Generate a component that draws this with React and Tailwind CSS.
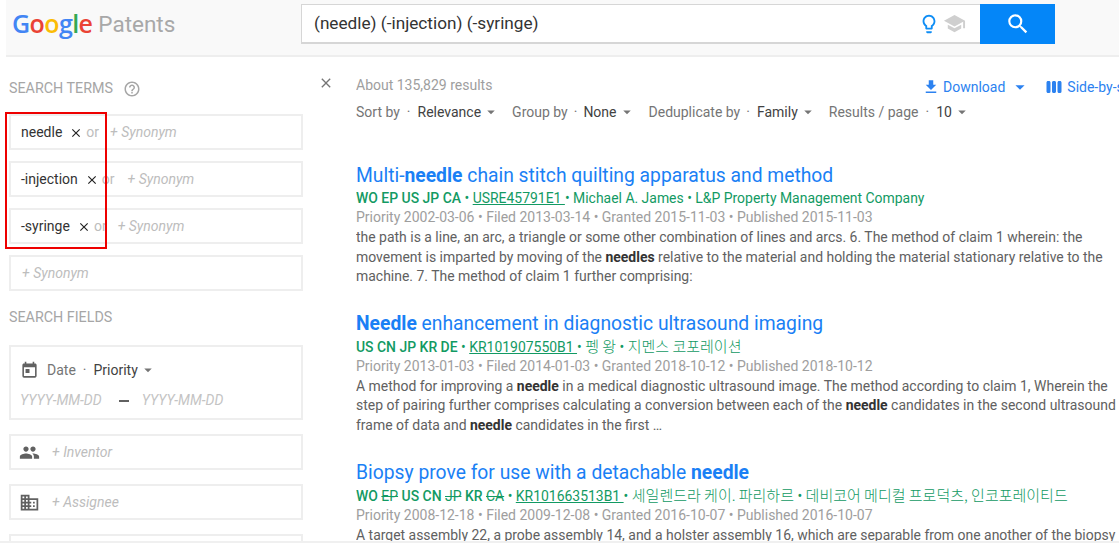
import {
  MdArrowDropDown,
  MdClose,
  MdDomain,
  MdFileDownload,
  MdHelpOutline,
  MdOutlineLightbulb,
  MdPeople,
  MdSchool,
  MdSearch,
  MdToday,
  MdViewWeek,
} from "react-icons/md";

const fontStack = "font-['Roboto','Noto_Sans_CJK_KR',sans-serif]";

const TermBox = ({ term, gap }) => (
  <div className="h-[36px] flex items-center border-2 border-[#eeeeee] pl-[10px] text-[14px]">
    <span className="text-[#333333]">{term}</span>
    <MdClose className="text-[#222222] ml-[7px] mt-[1px]" size={14} />
    <span className="text-[#bdbdbd] ml-[3px]">or</span>
    <span className={`italic text-[#bdbdbd] ${gap}`}>+ Synonym</span>
  </div>
);

const FieldBox = ({ icon, label }) => (
  <div className="h-[36px] flex items-center border-2 border-[#eeeeee] pl-[8px] text-[14px]">
    {icon}
    <span className="italic text-[#bdbdbd] ml-[12px]">{label}</span>
  </div>
);

const Filter = ({ label, value, className, dot = "mx-[6px]" }) => (
  <div className={`flex items-center ${className}`}>
    <span className="text-[#757575]">{label}</span>
    <span className={`text-[#757575] ${dot}`}>·</span>
    <span className="text-[#424242]">{value}</span>
    <MdArrowDropDown className="text-[#757575] ml-[1px]" size={18} />
  </div>
);

const Hl = ({ children }) => <b className="font-bold text-[#333333]">{children}</b>;

const Result = ({ title, meta, dates, children, className }) => (
  <div className={className}>
    <h3 className="text-[19.3px] pt-[1px] leading-[25px] text-[#1a80f5] whitespace-nowrap">{title}</h3>
    <div className="text-[13.95px] leading-[20px] text-[#129a63] whitespace-nowrap">{meta}</div>
    <div className="text-[14px] leading-[19px] text-[#9e9e9e] whitespace-nowrap">{dates}</div>
    <p className="text-[13.96px] leading-[19.5px] mt-[1px] text-[#616161] w-[763px]">{children}</p>
  </div>
);

const Code = ({ children }) => <b className="font-medium">{children}</b>;
const Off = ({ children }) => <span className="line-through font-normal">{children}</span>;
const Ko = ({ children }) => <span className="text-[15px] font-['Noto_Sans_CJK_KR',sans-serif] font-light">{children}</span>;

export default function App() {
  return (
    <div className={`h-[543px] w-[1119px] overflow-hidden bg-white relative ${fontStack}`}>
      <header className="ml-[6px] h-[57px] pt-[4px] bg-[#f9f9f9] border-b-2 border-[#eeeeee] flex">
        <div className="w-[295px] flex items-start pt-[2px] pl-[6px]">
          <span className="text-[25px] leading-[34px] tracking-[-0.6px] font-['Open_Sans',sans-serif] font-semibold">
            <span className="text-[#4285f4]">G</span>
            <span className="text-[#ea4335]">o</span>
            <span className="text-[#fbbc05]">o</span>
            <span className="text-[#4285f4]">g</span>
            <span className="text-[#34a853]">l</span>
            <span className="text-[#ea4335]">e</span>
          </span>
          <span className="text-[22.5px] leading-[36px] text-[#a8a8a8] ml-[6px]">Patents</span>
        </div>
        <div className="w-[679px] h-[40px] bg-white border border-[#d6d6d6] border-r-0 border-b-2 flex items-center pl-[12px] pr-[14px]">
          <span className="flex-1 text-[17.2px] text-[#333333]">(needle) (-injection) (-syringe)</span>
          <MdOutlineLightbulb className="text-[#0e8df5]" size={22} />
          <MdSchool className="text-[#cfcfcf] ml-[3px]" size={23} />
        </div>
        <button className="w-[75px] h-[40px] bg-[#0486f8] flex items-center justify-center">
          <MdSearch className="text-white" size={26} />
        </button>
      </header>

      <div className="flex">
        <aside className="w-[297px] ml-[6px] pl-[3px] shrink-0">
          <div className="flex items-center text-[14.3px] text-[#a6a6a6] mt-[23px] h-[17px]">
            SEARCH TERMS
            <MdHelpOutline className="ml-[10px]" size={18} />
          </div>
          <div className="flex flex-col gap-[11px] mt-[17px]">
            <TermBox term="needle" gap="ml-[11px]" />
            <TermBox term="-injection" gap="ml-[13px]" />
            <TermBox term="-syringe" gap="ml-[11px]" />
            <div className="h-[36px] flex items-center border-2 border-[#eeeeee] pl-[11px] text-[14px]">
              <span className="italic text-[#bdbdbd]">+ Synonym</span>
            </div>
          </div>
          <div className="text-[14.3px] text-[#a6a6a6] mt-[18px] h-[17px] leading-[17px]">SEARCH FIELDS</div>
          <div className="mt-[19px] h-[75px] border-2 border-[#eeeeee] pl-[9px] pt-[13px] text-[14px]">
            <div className="flex items-center h-[20px]">
              <MdToday className="text-[#616161]" size={19} />
              <span className="text-[#757575] ml-[8px]">Date</span>
              <span className="text-[#757575] mx-[7px]">·</span>
              <span className="text-[#424242]">Priority</span>
              <MdArrowDropDown className="text-[#757575] ml-[1px]" size={18} />
            </div>
            <div className="flex items-center mt-[10px] italic text-[#c4c4c4]">
              <span>YYYY-MM-DD</span>
              <span className="w-[10px] h-[2px] bg-[#616161] ml-[17px] mr-[13px]"></span>
              <span>YYYY-MM-DD</span>
            </div>
          </div>
          <div className="flex flex-col gap-[14px] mt-[14px]">
            <FieldBox icon={<MdPeople className="text-[#616161]" size={21} />} label="+ Inventor" />
            <FieldBox icon={<MdDomain className="text-[#616161]" size={21} />} label="+ Assignee" />
            <div className="h-[36px] border-2 border-[#eeeeee]"></div>
          </div>
        </aside>

        <div className="w-[53px] shrink-0 pl-[15px] pt-[18px]">
          <MdClose className="text-[#757575]" size={16} />
        </div>

        <main className="flex-1 min-w-0 overflow-hidden">
          <div className="flex items-start h-[27px] pt-[20px] whitespace-nowrap text-[14px]">
            <span className="text-[#9e9e9e] w-[566px] shrink-0 leading-[17px]">About 135,829 results</span>
            <div className="flex items-center text-[#2c82f0] leading-[17px] -mt-[1px]">
              <MdFileDownload size={18} />
              <span className="ml-[3px]">Download</span>
              <MdArrowDropDown className="ml-[4px]" size={22} />
              <MdViewWeek className="ml-[14px]" size={18} />
              <span className="ml-[4px]">Side-by-side view</span>
            </div>
          </div>
          <div className="flex items-center h-[20px] mt-[18px] text-[14px] whitespace-nowrap">
            <Filter label="Sort by" value="Relevance" dot="mx-[7px]" />
            <Filter label="Group by" value="None" className="ml-[12px]" />
            <Filter label="Deduplicate by" value="Family" className="ml-[13px]" dot="ml-[6px] mr-[7px]" />
            <Filter label="Results / page" value="10" className="ml-[12px]" dot="mx-[7px]" />
          </div>

          <Result
            className="mt-[40px]"
            title={<>Multi-<b className="font-bold">needle</b> chain stitch quilting apparatus and method</>}
            meta={<><Code>WO EP US JP CA</Code> • <u>USRE45791E1 </u> • Michael A. James • L&amp;P Property Management Company</>}
            dates="Priority 2002-03-06 • Filed 2013-03-14 • Granted 2015-11-03 • Published 2015-11-03"
          >
            the path is a line, an arc, a triangle or some other combination of lines and arcs. 6. The method of claim 1 wherein: the movement is imparted by moving of the <Hl>needles</Hl> relative to the material and holding the material stationary relative to the machine. 7. The method of claim 1 further comprising:
          </Result>

          <Result
            className="mt-[23px]"
            title={<><b className="font-bold">Needle</b> enhancement in diagnostic ultrasound imaging</>}
            meta={<><Code>US CN JP KR DE</Code> • <u>KR101907550B1 </u> • <Ko>펭 왕</Ko> • <Ko>지멘스 코포레이션</Ko></>}
            dates="Priority 2013-01-03 • Filed 2014-01-03 • Granted 2018-10-12 • Published 2018-10-12"
          >
            A method for improving a <Hl>needle</Hl> in a medical diagnostic ultrasound image. The method according to claim 1, Wherein the step of pairing further comprises calculating a conversion between each of the <Hl>needle</Hl> candidates in the second ultrasound frame of data and <Hl>needle</Hl> candidates in the first …
          </Result>

          <Result
            className="mt-[24px]"
            title={<>Biopsy prove for use with a detachable <b className="font-bold">needle</b></>}
            meta={<><Code>WO <Off>EP</Off> US CN <Off>JP</Off> KR <Off>CA</Off></Code> • <u>KR101663513B1 </u> • <Ko>세일렌드라 케이. 파리하르</Ko> • <Ko>데비코어 메디컬 프로덕츠, 인코포레이티드</Ko></>}
            dates="Priority 2008-12-18 • Filed 2009-12-08 • Granted 2016-10-07 • Published 2016-10-07"
          >
            A target assembly 22, a probe assembly 14, and a holster assembly 16, which are separable from one another of the biopsy
          </Result>
        </main>
      </div>

      {/* red annotation box drawn over the search terms */}
      <div className="absolute left-[5px] top-[112px] w-[102px] h-[137px] border-2 border-[#ee0000]"></div>
      <div className="absolute left-0 right-0 bottom-0 h-[2px] bg-[#f0f0f0]"></div>
    </div>
  );
}
